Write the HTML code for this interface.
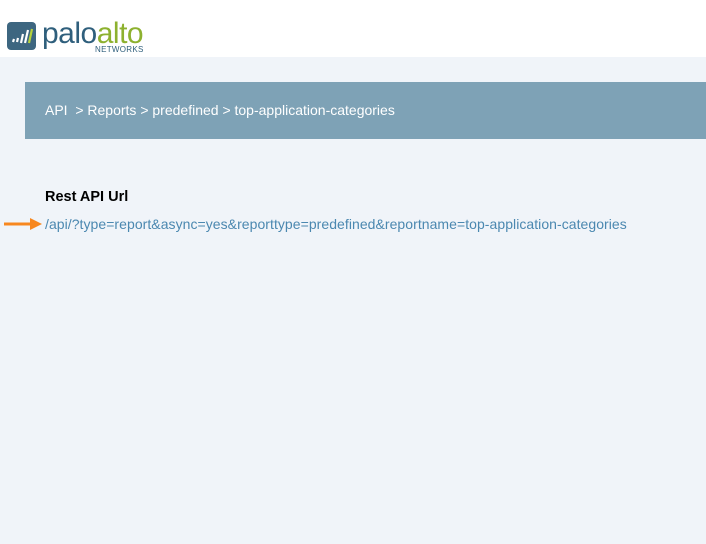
<!DOCTYPE html>
<html><head><meta charset="utf-8"><style>
*{margin:0;padding:0;box-sizing:border-box}
body{width:706px;height:544px;background:#f0f4f9;font-family:"Liberation Sans",sans-serif;position:relative;overflow:hidden}
.hdr{position:absolute;left:0;top:0;width:706px;height:57px;background:#fff}
.logo{position:absolute;left:7px;top:22px;width:29px;height:28px;background:#3d6680;border-radius:4px}
.pa{position:absolute;left:42px;top:14px;font-size:30px;letter-spacing:-0.5px;color:#2f5f7c;line-height:40px}
.pa span{color:#8db12f}
.nw{position:absolute;left:95px;top:45px;font-size:8px;color:#2f5f7c;letter-spacing:0.3px}
.bar{position:absolute;left:25px;top:82px;width:681px;height:57px;background:#7ea2b6;color:#fff;font-size:14px;padding-left:20px;line-height:57px}
.t{position:absolute;left:45px;top:189px;font-size:14.5px;font-weight:bold;color:#000}
.u{position:absolute;left:45px;top:216px;font-size:14px;color:#4b88b0;letter-spacing:0.05px;white-space:nowrap}
</style></head><body>
<div class="hdr">
<div class="logo"><svg width="29" height="28" viewBox="0 0 29 28"><g stroke="#fff" stroke-width="2.2"><line x1="6" y1="20" x2="7" y2="17"/><line x1="10" y1="20" x2="11" y2="16"/><line x1="14" y1="21" x2="16" y2="12"/><line x1="18" y1="21" x2="21" y2="8"/></g><line x1="22" y1="21" x2="25" y2="7" stroke="#b6d33c" stroke-width="2.2"/></svg></div>
<div class="pa">palo<span>alto</span></div>
<div class="nw">NETWORKS</div>
</div>
<div class="bar">API &nbsp;&gt; Reports &gt; predefined &gt; top-application-categories</div>
<div class="t">Rest API Url</div>
<svg style="position:absolute;left:4px;top:217px" width="40" height="14" viewBox="0 0 40 14"><line x1="0" y1="7" x2="28" y2="7" stroke="#f7871f" stroke-width="3"/><polygon points="26,1 38,7 26,13" fill="#f7871f"/></svg>
<div class="u">/api/?type=report&amp;async=yes&amp;reporttype=predefined&amp;reportname=top-application-categories</div>
</body></html>
